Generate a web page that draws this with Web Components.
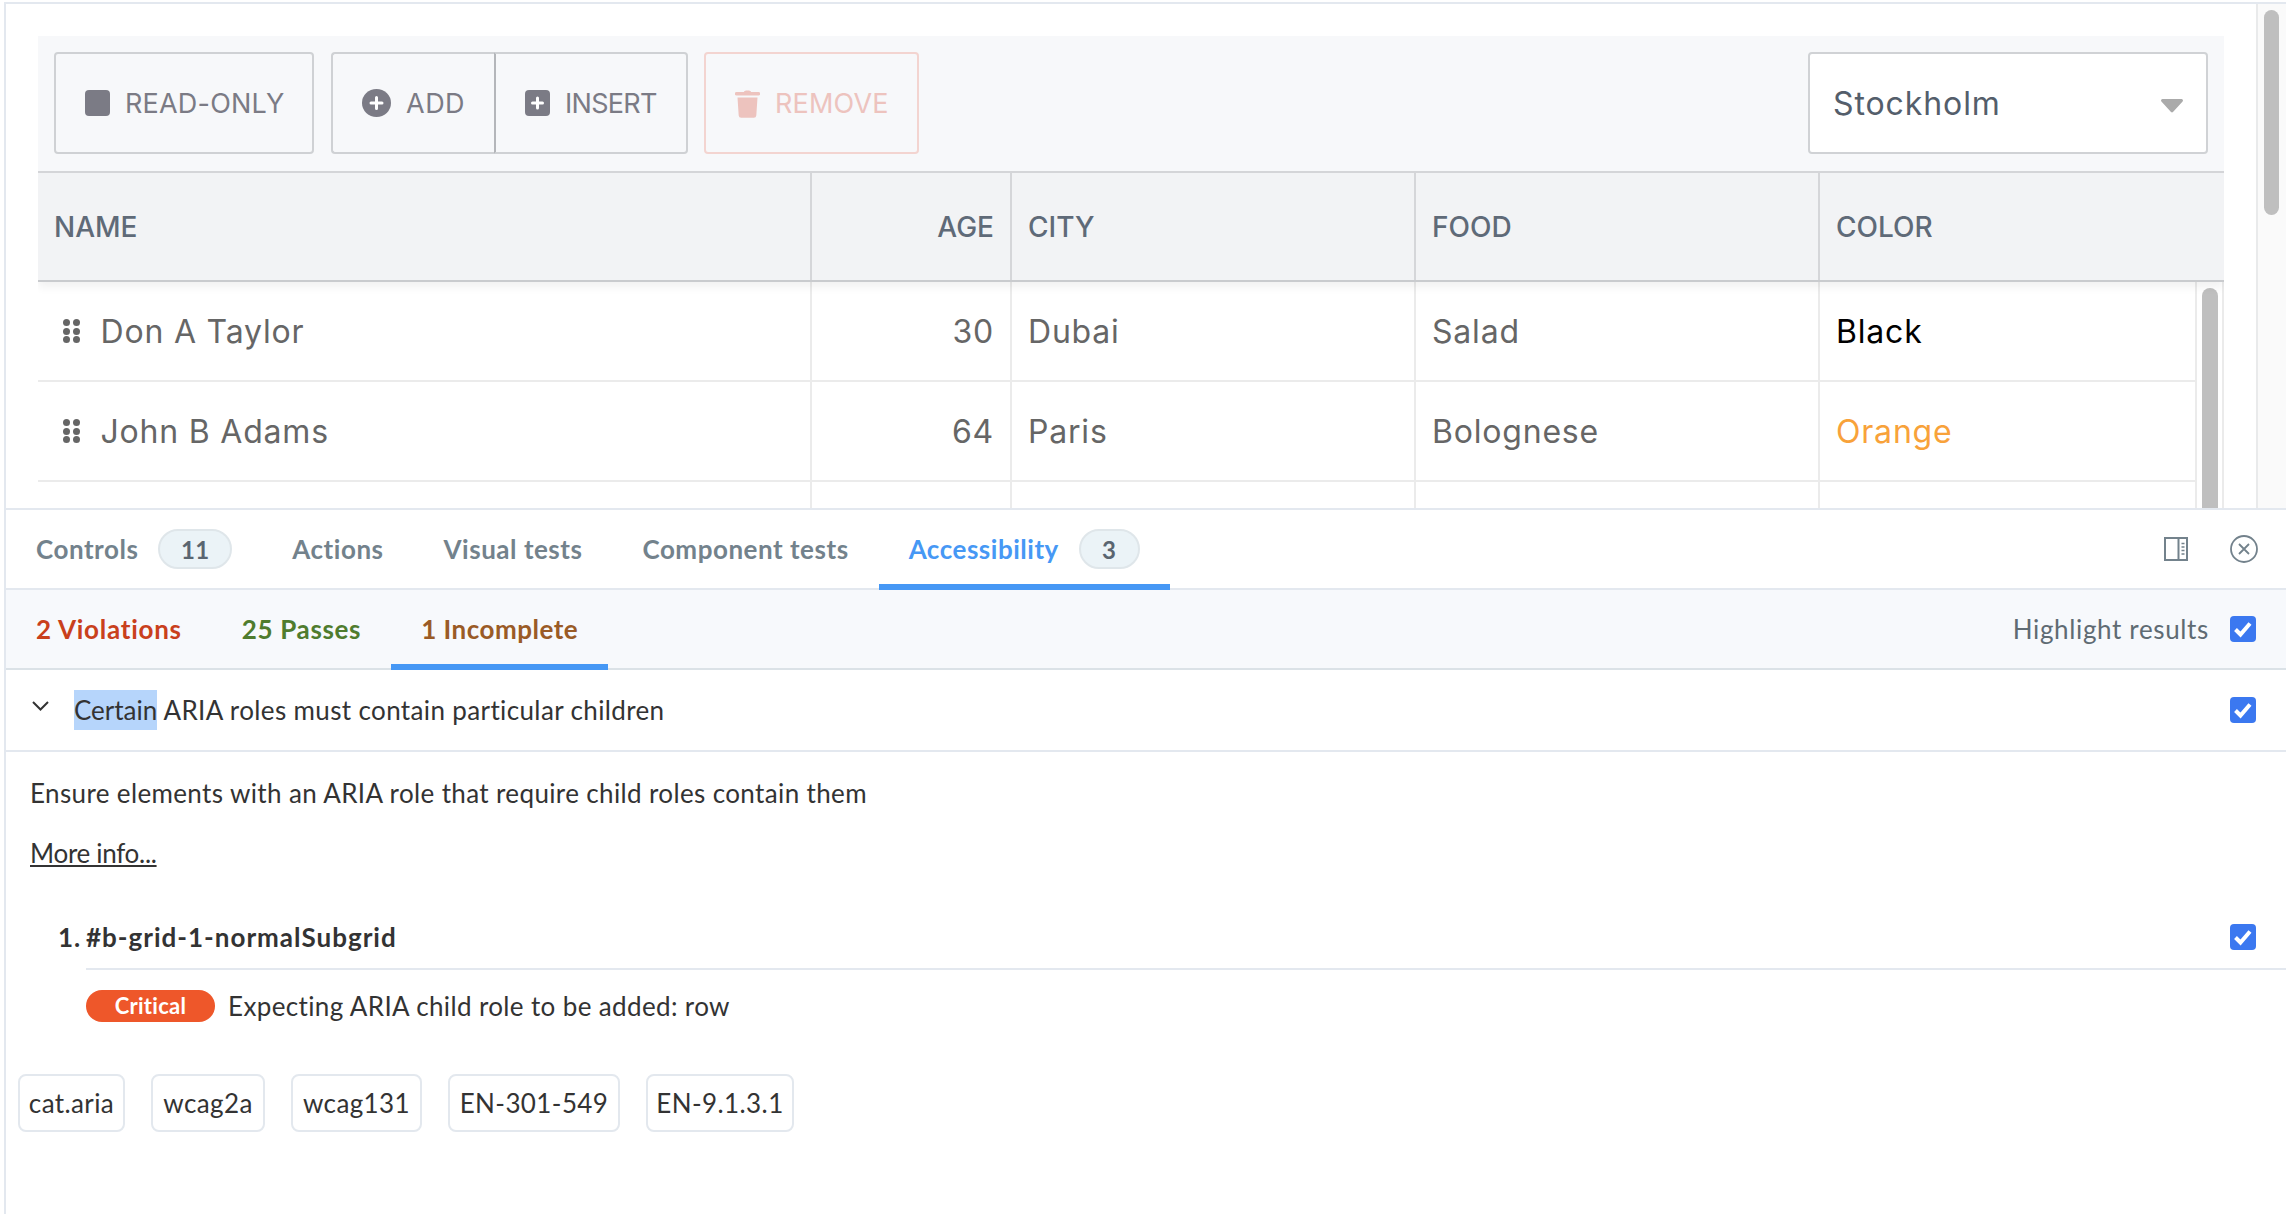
<!DOCTYPE html>
<html lang="en"><head><meta charset="utf-8"><title>Grid accessibility</title>
<style>
html,body{margin:0;padding:0;background:#fff;height:1214px;overflow:hidden}
body{font-family:"Lato","Noto Sans",sans-serif;color:#333}
</style></head><body>
<story-page>
  <story-preview slot="preview">
    <data-grid>
      <grid-toolbar>
        <tool-button style="margin-right:17px" textw="158"><svg slot="icon" width="25" height="26" viewBox="0 0 25 26"><rect width="25" height="26" rx="4" fill="#7b7b85"/></svg>READ-ONLY</tool-button>
        <tool-group>
          <tool-button grouped="first" textw="57" style="letter-spacing:.5px"><svg slot="icon" width="29" height="28" viewBox="0 0 29 28"><ellipse cx="14.500" cy="14" rx="14.500" ry="14" fill="#7b7b85"/><path d="M14.500 8.500v11M9 14h11" stroke="#fff" stroke-width="3" stroke-linecap="round"/></svg>ADD</tool-button>
          <tool-button grouped="last" textw="92" style="letter-spacing:-.7px"><svg slot="icon" width="25" height="26" viewBox="0 0 25 26"><rect width="25" height="26" rx="4" fill="#7b7b85"/><path d="M12.500 8v10M7.500 13h10" stroke="#fff" stroke-width="3" stroke-linecap="round"/></svg>INSERT</tool-button>
        </tool-group>
        <tool-button danger style="margin-left:16px" textw="113"><svg slot="icon" width="25" height="29" viewBox="0 0 25 29"><path d="M9 2.500C9.500 1 15.500 1 16 2.500V3h7.500a1.500 1.500 0 0 1 0 3.500h-22a1.500 1.500 0 0 1 0-3.500H9z" fill="#edc3be"/><path d="M2.500 8.500h20l-1.200 18a2.500 2.500 0 0 1-2.500 2.300H6.200a2.500 2.500 0 0 1-2.500-2.300z" fill="#edc3be"/></svg>REMOVE</tool-button>
        <city-select>Stockholm</city-select>
      </grid-toolbar>
      <grid-row header><span>NAME</span><span slot="age">AGE</span><span slot="city">CITY</span><span slot="food">FOOD</span><span slot="color">COLOR</span></grid-row>
      <grid-body>
        <grid-row handle>Don A Taylor<span slot="age">30</span><span slot="city">Dubai</span><span slot="food">Salad</span><span slot="color" style="color:#000">Black</span></grid-row>
        <grid-row handle>John B Adams<span slot="age">64</span><span slot="city">Paris</span><span slot="food">Bolognese</span><span slot="color" style="color:#f8a23a">Orange</span></grid-row>
        <grid-row></grid-row>
      </grid-body>
    </data-grid>
  </story-preview>
  <addon-panel slot="panel">
    <tab-bar>
      <tab-item badge="11" badgew="74">Controls</tab-item>
      <tab-item>Actions</tab-item>
      <tab-item>Visual tests</tab-item>
      <tab-item>Component tests</tab-item>
      <tab-item badge="3" badgew="61" active>Accessibility</tab-item>
      <svg slot="tools" width="24" height="24" viewBox="0 0 24 24" style="margin-right:42px"><rect x="1" y="1" width="22" height="22" fill="none" stroke="#73828c" stroke-width="2"/><path d="M14.500 1v22" stroke="#73828c" stroke-width="2"/><path d="M17.500 6.500h3M17.500 10h3M17.500 13.500h3M17.500 17h3" stroke="#73828c" stroke-width="1.600"/></svg>
      <svg slot="tools" width="28" height="28" viewBox="0 0 28 28" style="margin-right:28px"><circle cx="14" cy="14" r="13" fill="none" stroke="#73828c" stroke-width="1.800"/><path d="M9 9l10 10M19 9L9 19" stroke="#73828c" stroke-width="1.800"/></svg>
    </tab-bar>
    <result-tabs>
      <tab-item sub style="color:#c9401c;letter-spacing:.75px">2 Violations</tab-item>
      <tab-item sub style="color:#4f7c2e;letter-spacing:.65px">25 Passes</tab-item>
      <tab-item sub active style="color:#9a5b26">1 Incomplete</tab-item>
      <span slot="right">Highlight results</span>
    </result-tabs>
    <rule-header><mark-text>Certain</mark-text> ARIA roles must contain particular children</rule-header>
    <rule-detail>
      <p-line>Ensure elements with an ARIA role that require child roles contain them</p-line>
      <p-line link style="letter-spacing:-.3px">More info...</p-line>
      <node-result selector="#b-grid-1-normalSubgrid" message="Expecting ARIA child role to be added: row"></node-result>
      <tag-list>
        <rule-tag style="width:107px">cat.aria</rule-tag><rule-tag style="width:114px">wcag2a</rule-tag><rule-tag style="width:131px">wcag131</rule-tag><rule-tag style="width:172px">EN-301-549</rule-tag><rule-tag style="width:148px">EN-9.1.3.1</rule-tag>
      </tag-list>
    </rule-detail>
  </addon-panel>
</story-page>
<script>
const POP='"Inter","Lato",sans-serif', NUN='"Lato","Noto Sans",sans-serif';
function def(name, css, html, init){
  customElements.define(name, class extends HTMLElement{
    connectedCallback(){
      if(this.shadowRoot) return;
      const s=this.attachShadow({mode:'open'});
      s.innerHTML='<style>'+css+'</style>'+(typeof html==='function'?html(this):html);
      if(init) init(this,s);
    }
  });
}
const check='<svg width="26" height="26" viewBox="0 0 26 26" style="display:block;flex:none"><rect width="26" height="26" rx="4" fill="#3b78f0"/><path d="M5.500 13.500l5 5L20 7.500" fill="none" stroke="#fff" stroke-width="4"/></svg>';
def('story-page',`:host{display:flex;flex-direction:column;width:2280px;height:1210px;margin:2px 0 0 4px;border-top:2px solid #e3e8ef;border-left:2px solid #e3e8ef;overflow:hidden;box-sizing:content-box}`,
 `<slot name="preview"></slot><slot name="panel"></slot>`);
def('story-preview',`:host{display:flex;height:504px;flex:none;overflow:hidden;font-family:${POP}}
 .main{flex:none;width:2250px;padding:32px 32px 0 32px;box-sizing:border-box;height:504px;overflow:hidden}
 .sb{flex:1;background:#fafafa;border-left:2px solid #e9eaeb}
 .t{width:15px;height:205px;margin:6px 0 0 6px;border-radius:8px;background:#bfbfbf}`,
 `<div class="main"><slot></slot></div><div class="sb"><div class="t"></div></div>`);
def('data-grid',`:host{display:block;width:2186px}`,`<slot></slot>`);
def('grid-toolbar',`:host{display:flex;align-items:center;box-sizing:border-box;height:137px;padding:0 16px 1px;background:#f7f8fa;border-bottom:2px solid #d4d5d8}
 ::slotted(city-select){margin-left:auto}`,`<slot></slot>`);
def('tool-group',`:host{display:flex}`,`<slot></slot>`);
def('tool-button',`:host{display:flex;align-items:center;gap:15px;box-sizing:border-box;height:102px;padding:0 29px;border:2px solid #cfd1d4;border-radius:4px;font-size:27px;color:#7b7b85;white-space:nowrap;letter-spacing:.2px;font-weight:400}
 :host([grouped=first]){border-radius:4px 0 0 4px;border-right:0;padding-right:31px}
 :host([grouped=last]){border-radius:0 4px 4px 0;border-left:2px solid #b4b6ba}
 :host([danger]){border-color:#f3d4d0;color:#edc3be}
 ::slotted(svg){display:block}
 .x{display:block;white-space:nowrap}`,
 t=>`<slot name="icon"></slot><span class="x" style="width:${t.getAttribute('textw')}px"><slot></slot></span>`);
def('city-select',`:host{display:flex;align-items:center;justify-content:space-between;box-sizing:border-box;width:400px;height:102px;padding:0 22px 0 23px;background:#fff;border:2px solid #d0d2d5;border-radius:4px;font-size:32px;letter-spacing:.9px;color:#545e6b}
 svg{display:block;margin-top:4px}`,`<span><slot></slot></span><svg width="24" height="15" viewBox="0 0 24 15"><path d="M2.500 1h19a1.500 1.500 0 0 1 1.100 2.500L13 14a1.500 1.500 0 0 1-2 0L1.400 3.500A1.500 1.500 0 0 1 2.500 1z" fill="#aaa"/></svg>`);
def('grid-body',`:host{display:flex;height:226px;overflow:hidden}
 .rows{flex:none;width:2157px}
 .sc{flex:1;border-left:2px solid #ebebeb;border-right:2px solid #ebebeb}
 .th{width:16px;height:300px;margin:6px 0 0 5px;border-radius:8px;background:#bfbfbf}`,
 `<div class="rows"><slot></slot></div><div class="sc"><div class="th"></div></div>`);
def('grid-row',`:host{display:grid;grid-template-columns:774px 200px 404px 404px 1fr;box-sizing:border-box;height:100px;font-size:32px;letter-spacing:.8px;color:#666;border-bottom:2px solid #ebebeb;font-weight:400}
 :host([header]){height:109px;background:#f2f3f5;border-bottom:2px solid #c9cbce;color:#5f6a78;font-size:28px;font-weight:500;letter-spacing:0;position:relative;box-shadow:0 5px 9px rgba(0,0,0,.06);clip-path:inset(0 0 -14px 0);z-index:1}
 .c{display:flex;align-items:center;padding:0 16px;border-right:2px solid #ebebeb;box-sizing:border-box;min-width:0;white-space:nowrap}
 :host([header]) .c{border-right-color:#d5d6d9}
 .c:last-child{border-right:0}
 .age{justify-content:flex-end;padding-right:16px}
 .dots{display:grid;grid-template-columns:7px 7px;gap:1.500px 2.500px;margin:0 21px 0 9px}
 .dots i{width:7px;height:7px;border-radius:50%;background:#666}`,
 t=>`<div class="c">${t.hasAttribute('handle')?'<span class="dots"><i></i><i></i><i></i><i></i><i></i><i></i></span>':''}<span><slot></slot></span></div>
 <div class="c age"><slot name="age"></slot></div><div class="c"><slot name="city"></slot></div><div class="c"><slot name="food"></slot></div><div class="c"><slot name="color"></slot></div>`);
def('addon-panel',`:host{display:block;flex:1;border-top:2px solid #e3e8ef;font-family:${NUN};font-size:26px;letter-spacing:.37px;color:#333}`,`<slot></slot>`);
def('tab-bar',`:host{display:flex;align-items:stretch;box-sizing:border-box;height:80px;border-bottom:2px solid #e3e8ef}
 .r{margin-left:auto;display:flex;align-items:center}
 ::slotted(svg){display:block}`,`<slot></slot><div class="r"><slot name="tools"></slot></div>`);
def('result-tabs',`:host{display:flex;align-items:stretch;box-sizing:border-box;height:80px;background:#f7f9fc;border-bottom:2px solid #dbe2e7}
 .r{margin-left:auto;display:flex;align-items:center;gap:21px;padding-right:30px;color:#5f6b73;font-size:26px;letter-spacing:.65px}`,
 `<slot></slot><div class="r"><slot name="right"></slot>${check}</div>`);
def('tab-item',`:host{display:flex;align-items:center;gap:20px;padding:0 30px 2px;margin-bottom:-2px;position:relative;font-weight:700;font-size:26px;letter-spacing:.52px;color:#73828c;white-space:nowrap}
 :host([sub]){letter-spacing:.5px}
 :host([active]){color:#4698f5}
 :host([active])::after{content:"";position:absolute;left:0;right:0;bottom:0;height:6px;background:#4698f5}
 :host([sub][active]){color:inherit}
 .b{display:flex;align-items:center;justify-content:center;box-sizing:border-box;height:40px;background:#ebf3f7;border:2px solid #dfe6ea;border-radius:20px;color:#5a6570;font-size:24px}`,
 t=>`<span><slot></slot></span>${t.hasAttribute('badge')?`<span class="b" style="width:${t.getAttribute('badgew')}px">${t.getAttribute('badge')}</span>`:''}`);
def('rule-header',`:host{display:flex;align-items:center;box-sizing:border-box;height:82px;border-bottom:2px solid #e3e8ef;padding:0 30px 0 26px;font-size:26px;color:#333}
 .t{flex:1;margin-left:25px;white-space:pre;line-height:40px}
 .ch{display:block;margin-top:-9px}`,
 `<svg class="ch" width="17" height="10" viewBox="0 0 17 10"><path d="M1 1l7.500 7.500L16 1" fill="none" stroke="#333" stroke-width="2"/></svg><span class="t"><slot></slot></span>${check}`);
def('mark-text',`:host{display:inline-block;background:#b6d5fb;height:40px;line-height:40px;letter-spacing:0}`,`<slot></slot>`);
def('rule-detail',`:host{display:block;padding:21px 0 0 0}`,`<slot></slot>`);
def('p-line',`:host{display:block;padding-left:24px;height:40px;line-height:40px;margin-bottom:20px;white-space:nowrap}
 :host([link]) span{text-decoration:underline}`,`<span><slot></slot></span>`);
def('node-result',`:host{display:block;padding-top:20px}
 .h{display:flex;align-items:center;height:48px;padding:0 30px 0 52px;font-weight:700;letter-spacing:1px;color:#333}
 .h .n{width:28px;flex:none}.h .s{flex:1}
 .l{height:2px;background:#e3e8ef;margin:7px 0 0 80px}
 .m{display:flex;align-items:center;gap:13px;padding:20px 0 0 80px;height:32px}
 .c{display:flex;align-items:center;justify-content:center;box-sizing:border-box;padding-bottom:2px;width:129px;height:32px;border-radius:16px;background:#ee572a;color:#fff;font-weight:700;font-size:22px;letter-spacing:.3px}`,
 t=>`<div class="h"><span class="n">1.</span><span class="s">${t.getAttribute('selector')}</span>${check}</div><div class="l"></div>
 <div class="m"><span class="c">Critical</span><span>${t.getAttribute('message')}</span></div>`);
def('tag-list',`:host{display:flex;gap:26px;padding:52px 0 0 12px}`,`<slot></slot>`);
def('rule-tag',`:host{display:flex;align-items:center;justify-content:center;box-sizing:border-box;height:58px;border:2px solid #e3e8ee;border-radius:8px;white-space:nowrap;font-size:26px;letter-spacing:.4px}`,`<slot></slot>`);
</script>
</body></html>
